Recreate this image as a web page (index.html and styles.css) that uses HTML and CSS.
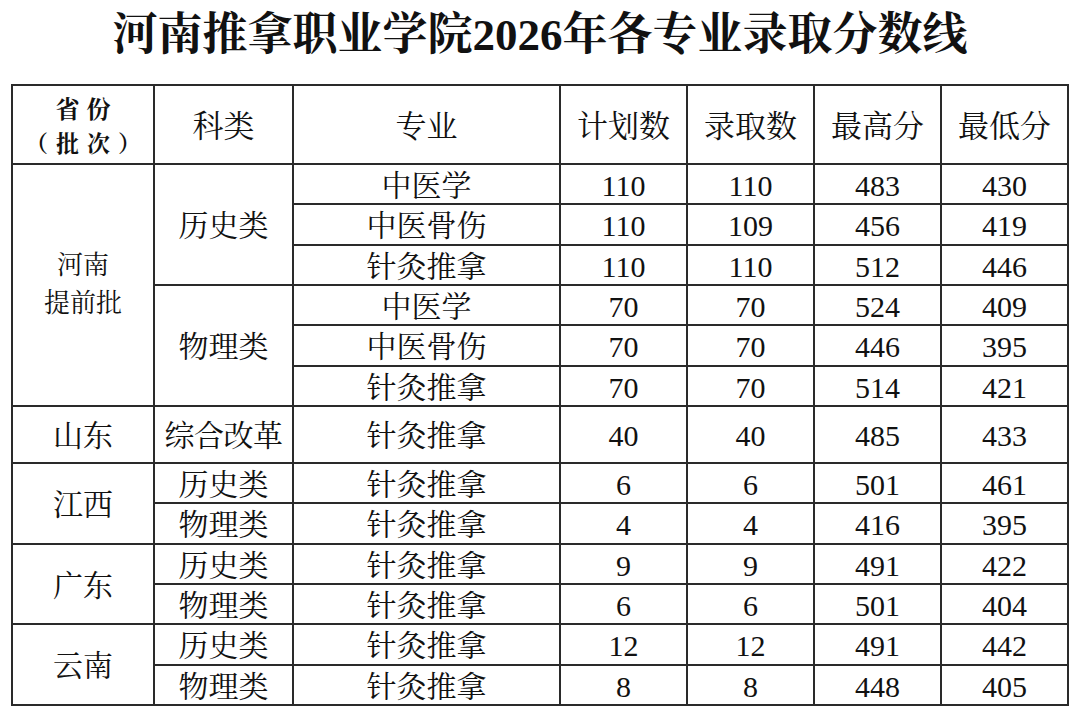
FILE: index.html
```html
<!DOCTYPE html>
<html lang="zh">
<head>
<meta charset="utf-8">
<link rel="stylesheet" href="styles.css">
</head>
<body>
<h1 class="title">河南推拿职业学院2026年各专业录取分数线</h1>
<table class="scores">
  <colgroup>
    <col class="c-prov"><col class="c-type"><col class="c-major"><col class="c-num"><col class="c-num"><col class="c-num"><col class="c-num">
  </colgroup>
  <thead>
    <tr class="r-head">
      <th class="prov-head"><span class="ph1">省份</span><span class="ph2">（批次）</span></th>
      <th>科类</th>
      <th>专业</th>
      <th>计划数</th>
      <th>录取数</th>
      <th>最高分</th>
      <th>最低分</th>
    </tr>
  </thead>
  <tbody>
    <tr class="r40"><td rowspan="6" class="prov-small">河南<br>提前批</td><td rowspan="3">历史类</td><td>中医学</td><td>110</td><td>110</td><td>483</td><td>430</td></tr>
    <tr class="r41"><td>中医骨伤</td><td>110</td><td>109</td><td>456</td><td>419</td></tr>
    <tr class="r40"><td>针灸推拿</td><td>110</td><td>110</td><td>512</td><td>446</td></tr>
    <tr class="r40"><td rowspan="3">物理类</td><td>中医学</td><td>70</td><td>70</td><td>524</td><td>409</td></tr>
    <tr class="r41"><td>中医骨伤</td><td>70</td><td>70</td><td>446</td><td>395</td></tr>
    <tr class="r40"><td>针灸推拿</td><td>70</td><td>70</td><td>514</td><td>421</td></tr>
    <tr class="r57"><td>山东</td><td class="tight">综合改革</td><td>针灸推拿</td><td>40</td><td>40</td><td>485</td><td>433</td></tr>
    <tr class="r40"><td rowspan="2">江西</td><td>历史类</td><td>针灸推拿</td><td>6</td><td>6</td><td>501</td><td>461</td></tr>
    <tr class="r41"><td>物理类</td><td>针灸推拿</td><td>4</td><td>4</td><td>416</td><td>395</td></tr>
    <tr class="r40"><td rowspan="2">广东</td><td>历史类</td><td>针灸推拿</td><td>9</td><td>9</td><td>491</td><td>422</td></tr>
    <tr class="r40"><td>物理类</td><td>针灸推拿</td><td>6</td><td>6</td><td>501</td><td>404</td></tr>
    <tr class="r41"><td rowspan="2">云南</td><td>历史类</td><td>针灸推拿</td><td>12</td><td>12</td><td>491</td><td>442</td></tr>
    <tr class="r40"><td>物理类</td><td>针灸推拿</td><td>8</td><td>8</td><td>448</td><td>405</td></tr>
  </tbody>
</table>
</body>
</html>
```

FILE: styles.css
```css
html, body {
  margin: 0;
  padding: 0;
  background: #fff;
}
body {
  width: 1080px;
  height: 716px;
  overflow: hidden;
  color: #111;
  font-family: "Liberation Serif", "Noto Serif CJK SC", "Noto Sans CJK SC", serif;
}
.title {
  margin: 0;
  height: 84px;
  box-sizing: border-box;
  padding-top: 8px;
  text-align: center;
  font-size: 45px;
  line-height: 54px;
  font-weight: bold;
  letter-spacing: 0;
}
.scores {
  margin-left: 11px;
  width: 1058px;
  border-collapse: collapse;
  table-layout: fixed;
}
.c-prov { width: 142px; }
.c-type { width: 139px; }
.c-major { width: 267px; }
.c-num { width: 127px; }
.scores th,
.scores td {
  border: 2px solid #2a2a2a;
  padding: 0;
  text-align: center;
  vertical-align: middle;
  font-size: 30px;
  font-weight: normal;
  line-height: 1;
}
.scores td {
  padding-top: 3px;
}
.scores th {
  font-size: 31px;
  padding-top: 3px;
}
.r-head { height: 79px; }
.r40 { height: 40px; }
.r41 { height: 41px; }
.r57 { height: 57px; }
.scores th.prov-head {
  padding-top: 0;
}
.prov-head .ph1,
.prov-head .ph2 {
  display: block;
  height: 35px;
  line-height: 35px;
  font-weight: bold;
  font-family: "Noto Serif CJK SC", "Noto Sans CJK SC", serif;
}
.prov-head .ph1 {
  font-size: 24px;
  letter-spacing: 7px;
  margin-right: -7px;
}
.prov-head .ph2 {
  font-size: 23px;
  letter-spacing: 8px;
  margin-right: -8px;
}
.scores td.prov-small {
  font-size: 26px;
  line-height: 38px;
  padding-top: 0;
}
.scores td.tight {
  letter-spacing: -0.5px;
}
```
